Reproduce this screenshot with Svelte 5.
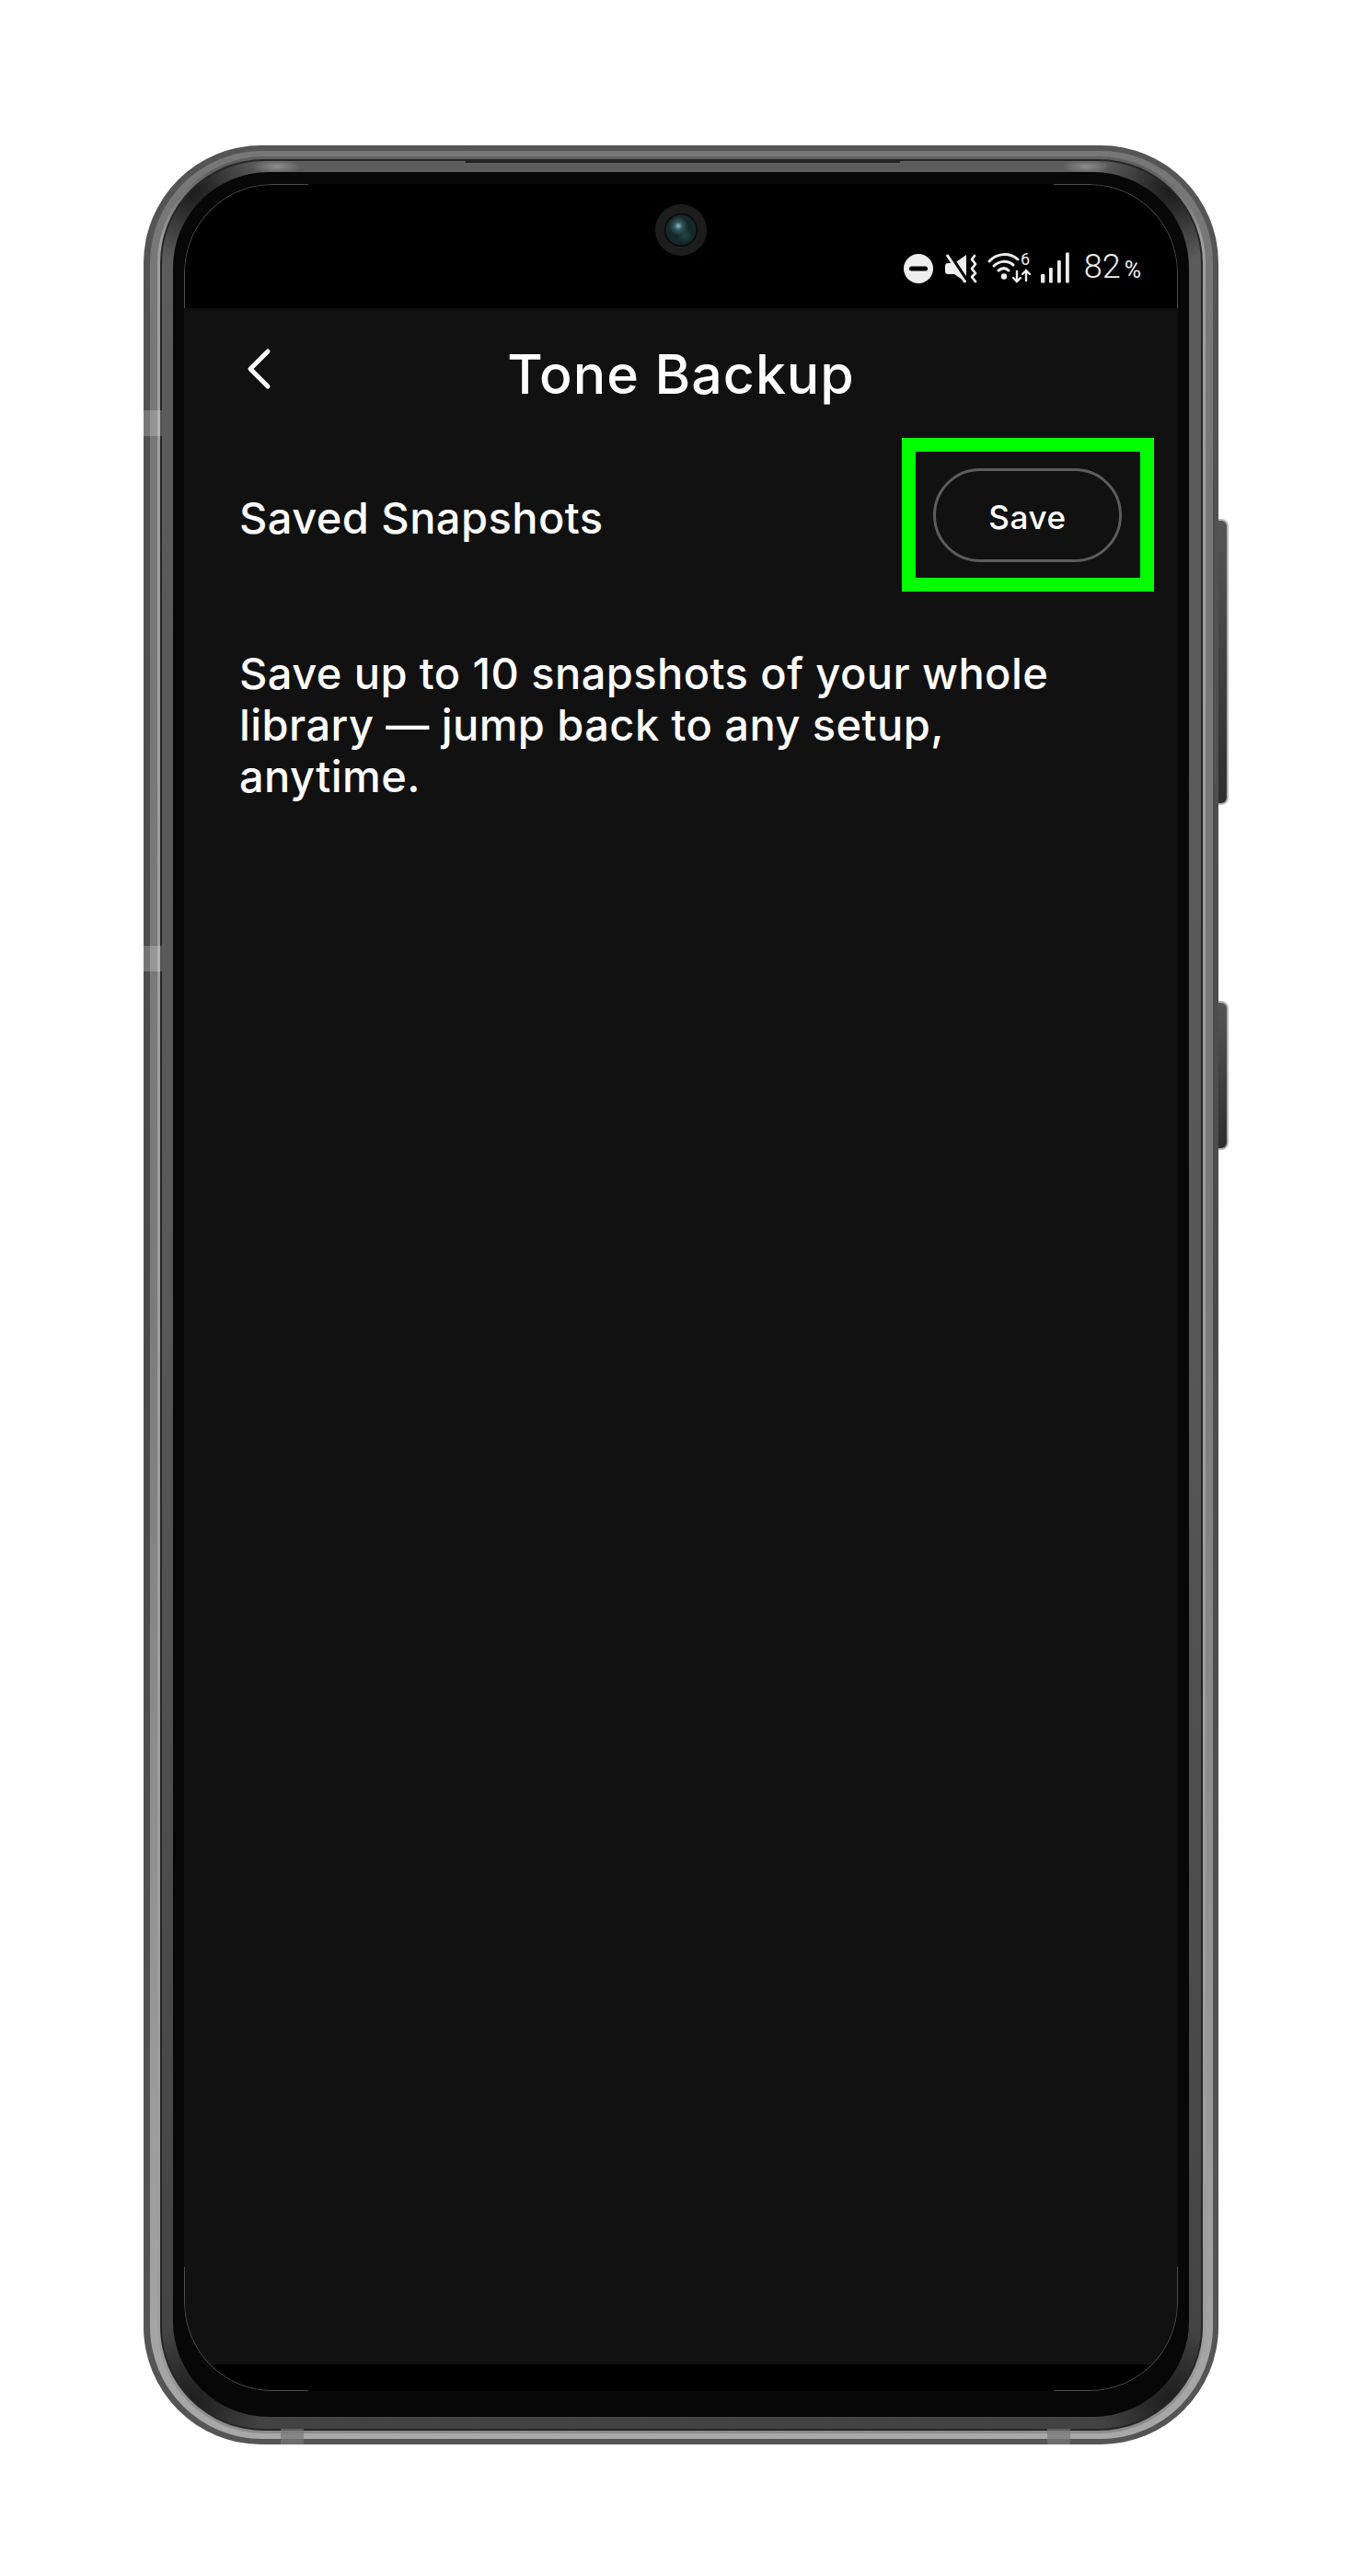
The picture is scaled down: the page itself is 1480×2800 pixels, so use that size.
<script>
	const lines = [
		'Save up to 10 snapshots of your whole',
		'library — jump back to any setup,',
		'anytime.'
	];
</script>

<div class="page">
	<div class="phone">
		<span class="mark mark-l1"></span>
		<span class="mark mark-l2"></span>
		<span class="mark mark-b1"></span>
		<span class="mark mark-b2"></span>
		<span class="side side-power"></span>
		<span class="side side-volume"></span>
		<span class="slot"></span>
		<div class="band">
			<div class="stripe">
				<div class="groove">
					<div class="bezel">
						<div class="glass">
							<div class="screen">
								<span class="edge edge-tl"></span>
								<span class="edge edge-tr"></span>
								<span class="edge edge-bl"></span>
								<span class="edge edge-br"></span>
								<span class="camera"><span class="lens"></span></span>

								<div class="status">
									<svg class="ic dnd" width="32" height="32" viewBox="0 0 32 32">
										<circle cx="16" cy="16" r="16" fill="#eee" />
										<rect x="6" y="13.5" width="20" height="5" rx="2.5" fill="#000" />
									</svg>
									<svg class="ic" width="35" height="32" viewBox="0 0 35 32">
										<path d="M3 10h7L23 1v30L10 22H3q-3 0-3-3v-6q0-3 3-3z" fill="#eee" />
										<path d="M3 -1l20 30" stroke="#000" stroke-width="5" />
										<path d="M2 1l20 30" stroke="#eee" stroke-width="3" />
										<path
											d="M32 2l-3 4 4 5-4 5 4 5-4 4 4 5"
											fill="none"
											stroke="#eee"
											stroke-width="2.8"
											stroke-linecap="round"
											stroke-linejoin="round"
										/>
									</svg>
									<svg class="ic" width="47" height="34" viewBox="0 0 47 34">
										<g fill="none" stroke="#eee" stroke-linecap="round">
											<path d="M2 10C10 1 24 0 33 8" stroke-width="3" />
											<path d="M7 15c6-6 15-6 21-1" stroke-width="3" />
											<path d="M12 20c4-3 8-3 11 0" stroke-width="3" />
											<path d="M32 21v11M28 28l4 4 4-4" stroke-width="2.4" />
											<path d="M42 31V20M38 24l4-4 4 4" stroke-width="2.4" />
										</g>
										<circle cx="18" cy="26.5" r="3.2" fill="#eee" />
										<text x="36" y="14" class="six">6</text>
									</svg>
									<svg class="ic" width="31" height="34" viewBox="0 0 31 34">
										<g fill="#eee">
											<rect x="0" y="24" width="4.4" height="9.5" rx="1.2" />
											<rect x="9" y="17" width="3.8" height="16.5" rx="1.2" />
											<rect x="18" y="9" width="3.8" height="24.5" rx="1.2" />
											<rect x="27" y="0.5" width="3.8" height="33" rx="1.2" />
										</g>
									</svg>
									<span class="battery">82<small>%</small></span>
								</div>

								<div class="app">
									<header class="topbar">
										<svg class="back" width="34" height="52" viewBox="0 0 34 52">
											<path
												d="M29 7L10 26l19 19"
												fill="none"
												stroke="#fff"
												stroke-width="5"
												stroke-linecap="round"
												stroke-linejoin="round"
											/>
										</svg>
										<h1>Tone Backup</h1>
										<span></span>
									</header>

									<div class="row">
										<span class="label">Saved Snapshots</span>
										<div class="highlight">
											<button class="save">Save</button>
										</div>
									</div>

									<p class="hint">
										{#each lines as line}
											<span>{line}</span>
										{/each}
									</p>
								</div>

								<div class="navbar"></div>
							</div>
						</div>
					</div>
				</div>
			</div>
		</div>
	</div>
</div>

<style>
	:global(body) {
		margin: 0;
		background: #fff;
	}

	.page {
		width: 1480px;
		height: 2800px;
		padding: 158px 0 0 156px;
		box-sizing: border-box;
		font-family: Inter, 'Liberation Sans', sans-serif;
	}

	/* metal frame, one nested ring per stripe */
	.phone {
		position: relative;
		width: 1168px;
		height: 2499px;
		box-sizing: border-box;
		padding: 6px 6px 6px 7px;
		border-radius: 128px;
		background: linear-gradient(#555, #4a4a4a 50%, #555);
	}

	.band {
		height: 100%;
		box-sizing: border-box;
		padding: 6px 8px;
		border-radius: 122px;
		background: linear-gradient(#777, #7a7a7a 50%, #a8a8a8);
	}

	.stripe {
		height: 100%;
		box-sizing: border-box;
		padding: 3px;
		border-radius: 116px;
		background: linear-gradient(#5f5f5f 0 14px, #9e9e9e 90px, #9e9e9e 96%, #8a8a8a);
	}

	.groove {
		height: 100%;
		box-sizing: border-box;
		padding: 2px;
		border-radius: 113px;
		background: #262626;
	}

	.bezel {
		height: 100%;
		box-sizing: border-box;
		padding: 12px 13px 13px 12px;
		border-radius: 111px;
		background:
			radial-gradient(26px 8px at 125px 6px, #8c8c8c, transparent),
			radial-gradient(26px 8px at calc(100% - 125px) 6px, #8c8c8c, transparent),
			radial-gradient(80px at 30px 30px, #181818, transparent),
			radial-gradient(80px at calc(100% - 30px) 30px, #181818, transparent),
			radial-gradient(80px at 30px calc(100% - 30px), #1c1c1c, transparent),
			radial-gradient(80px at calc(100% - 30px) calc(100% - 30px), #1c1c1c, transparent),
			linear-gradient(#5c5c5c, #585858 50%, #424242);
	}

	.glass {
		height: 100%;
		box-sizing: border-box;
		padding: 13px 12px 28px 12px;
		border-radius: 104px;
		background: #070707;
	}

	.screen {
		position: relative;
		height: 100%;
		display: flex;
		flex-direction: column;
		border-radius: 96px;
		background: #000;
		overflow: hidden;
	}

	.mark {
		position: absolute;
		background: rgba(255, 255, 255, 0.22);
	}

	.mark-l1,
	.mark-l2 {
		left: 0;
		width: 20px;
		height: 28px;
	}

	.mark-l1 {
		top: 288px;
	}

	.mark-l2 {
		top: 870px;
	}

	.mark-b1,
	.mark-b2 {
		bottom: 0;
		width: 25px;
		height: 17px;
		background: rgba(120, 120, 120, 0.7);
	}

	.mark-b1 {
		left: 149px;
	}

	.mark-b2 {
		right: 161px;
	}

	.slot {
		position: absolute;
		top: 17px;
		left: 350px;
		width: 472px;
		height: 2px;
		background: #222;
	}

	.side {
		position: absolute;
		right: -11px;
		width: 9px;
		border: 2px solid #b4b4b4;
		border-left: 0;
		border-radius: 0 8px 8px 0;
		background: linear-gradient(#555, #2e2e2e);
	}

	.side-power {
		top: 406px;
		height: 307px;
	}

	.side-volume {
		top: 930px;
		height: 158px;
	}

	.edge {
		position: absolute;
		z-index: 2;
		width: 134px;
		height: 134px;
		border: 0 solid #4c4c4c;
	}

	.edge-tl {
		top: 0;
		left: 0;
		border-width: 1px 0 0 1px;
		border-top-left-radius: 96px;
	}

	.edge-tr {
		top: 0;
		right: 0;
		border-width: 1px 1px 0 0;
		border-top-right-radius: 96px;
	}

	.edge-bl {
		bottom: 0;
		left: 0;
		border-width: 0 0 1px 1px;
		border-bottom-left-radius: 96px;
	}

	.edge-br {
		bottom: 0;
		right: 0;
		border-width: 0 1px 1px 0;
		border-bottom-right-radius: 96px;
	}

	.camera {
		position: absolute;
		top: 22px;
		left: 512px;
		width: 56px;
		height: 56px;
		border-radius: 50%;
		background: #1d1d1b;
		display: grid;
		place-items: center;
	}

	.lens {
		width: 36px;
		height: 36px;
		border-radius: 50%;
		background:
			radial-gradient(circle at 42% 38%, #8fc0c8 0, #33585f 14%, transparent 34%),
			radial-gradient(circle at 62% 66%, #1f4a42 0, transparent 26%),
			radial-gradient(circle, #16282b 0 62%, #070707 68%);
	}

	.status {
		flex: 0 0 135px;
		display: flex;
		align-items: flex-end;
		justify-content: flex-end;
		gap: 11px;
		box-sizing: border-box;
		padding: 0 40px 27px 0;
		color: #eee;
		font-family: Roboto, sans-serif;
	}

	.ic {
		display: block;
		overflow: visible;
	}

	.dnd {
		margin-right: 2px;
	}

	.six {
		font: 400 18px Roboto, sans-serif;
		fill: #eee;
	}

	.battery {
		font-size: 36px;
		font-weight: 300;
		line-height: 34px;
		margin: 0 0 -3px 5px;
	}

	.battery small {
		font-size: 25px;
		font-weight: 400;
		margin-left: 4px;
	}

	.app {
		flex: 1;
		background: #111;
		color: #fff;
	}

	.topbar {
		height: 141px;
		display: grid;
		grid-template-columns: 1fr auto 1fr;
		align-items: start;
	}

	.back {
		margin: 40px 0 0 62px;
	}

	h1 {
		margin: 37px 0 0;
		font-size: 59px;
		font-weight: 500;
		line-height: 70px;
		letter-spacing: 1px;
	}

	.row {
		display: flex;
		align-items: center;
		justify-content: space-between;
		padding: 0 26px 0 60px;
	}

	.label {
		padding-top: 6px;
		font-size: 47px;
		font-weight: 500;
		letter-spacing: 0.45px;
	}

	.highlight {
		padding: 18px 20px 17px 19px;
		border: 15px solid #0f0;
	}

	.save {
		display: block;
		width: 205px;
		height: 102px;
		box-sizing: border-box;
		border: 3px solid #5c5c5c;
		border-radius: 51px;
		background: none;
		color: #fff;
		font: 500 35px Inter, sans-serif;
		letter-spacing: 0.6px;
		padding: 4px 0 0;
	}

	.hint {
		margin: 61px 0 0;
		padding: 0 60px;
		font-size: 47px;
		font-weight: 500;
		letter-spacing: 0.43px;
		line-height: 56px;
	}

	.hint span {
		display: block;
	}

	.navbar {
		flex: 0 0 29px;
		background: #000;
	}
</style>
